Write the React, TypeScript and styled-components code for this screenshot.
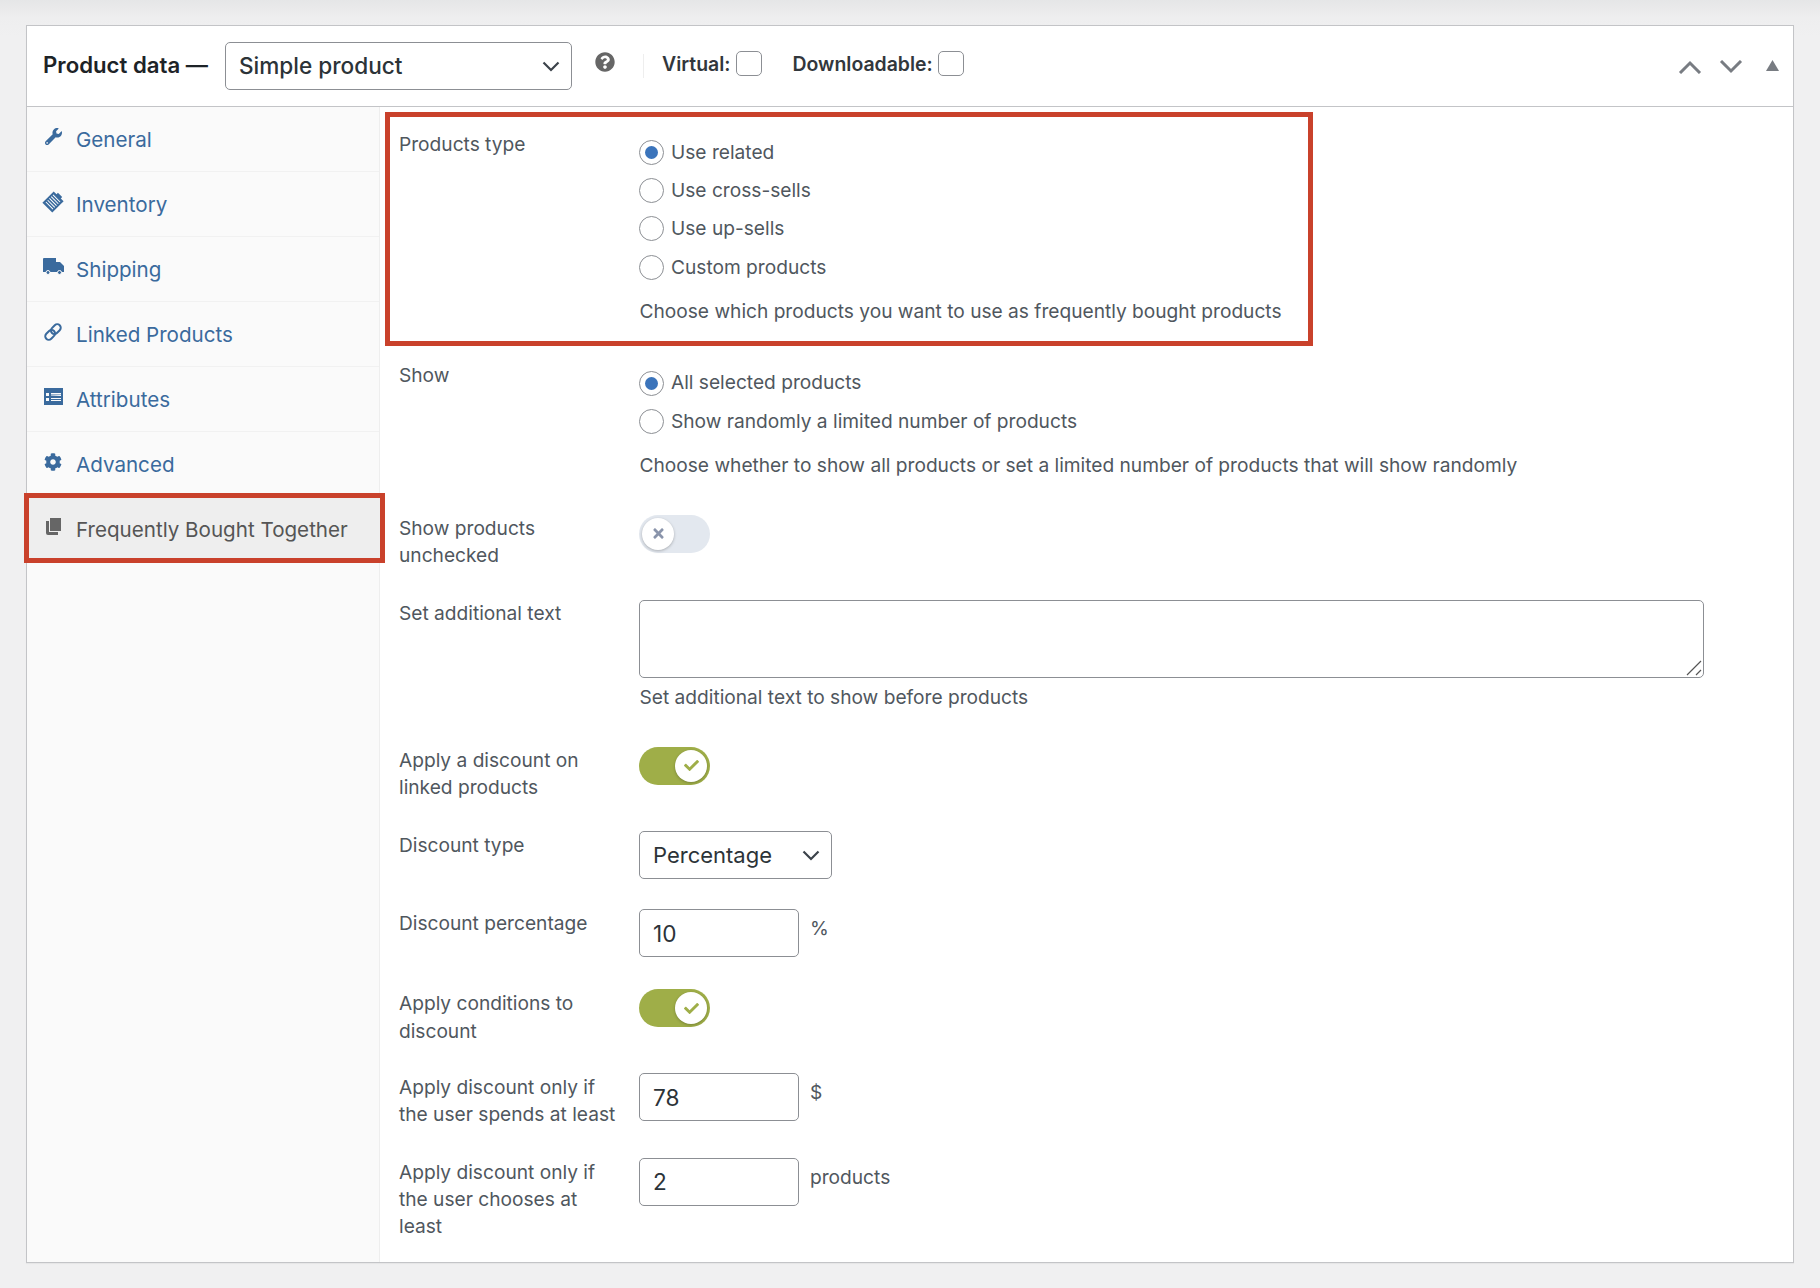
//Modules
import React from "react";
import styled, { createGlobalStyle } from "styled-components";
import { FaWrench, FaCog, FaQuestionCircle, FaTimes, FaCheck } from "react-icons/fa";

const GlobalStyle = createGlobalStyle`
    html, body{
        margin:0;
        padding:0;
    }
    body{
        min-height:1288px;
        background:linear-gradient(#e5e6e7 0, #eeeeef 18px, #f0f0f1 36px) no-repeat #f0f0f1;
        font-family:Inter, 'Noto Sans', sans-serif;
        font-size:19.15px;
        line-height:27.3px;
        color:#50575e;
    }
    *{
        box-sizing:border-box;
    }
`;

const Page = styled.div`
    padding:25px 26px 27px;
`;

const Panel = styled.section`
    width:1768px;
    background:#fff;
    border:1px solid #c3c4c7;
    box-shadow:0 1px 1px rgba(0,0,0,.04);
`;

const Header = styled.header`
    height:81px;
    display:flex;
    align-items:center;
    padding-left:16px;
    border-bottom:1px solid #c3c4c7;
`;

const Title = styled.h2`
    margin:-3px 17px 0 0;
    width:165px;
    white-space:nowrap;
    font-size:22.2px;
    font-weight:600;
    color:#1d2327;
`;

const SelectBox = styled.div<{ $width: number; $strong?: boolean }>`
    width:${p => p.$width}px;
    height:48px;
    display:flex;
    align-items:center;
    justify-content:space-between;
    padding:0 11px 0 13px;
    background:#fff;
    border:1px solid #8c8f94;
    border-radius:5px;
    font-size:${p => (p.$strong ? 22.6 : 22)}px;
    font-weight:${p => (p.$strong ? 500 : 400)};
    color:#2c3338;
`;

const HelpIcon = styled(FaQuestionCircle)`
    margin:-8px 0 0 23px;
    width:20px;
    height:20px;
    color:#666;
`;

const Divider = styled.span`
    width:1px;
    height:24px;
    margin:0 18px 0 28px;
    background:#eee;
`;

const CheckLabel = styled.label`
    display:flex;
    align-items:center;
    gap:5px;
    margin:-2px 31px 0 0;
    font-size:19.45px;
    font-weight:600;
    color:#32373c;
`;

const CheckInput = styled.input`
    appearance:none;
    margin:-2px 0 0;
    width:26px;
    height:25px;
    background:#fff;
    border:1px solid #8c8f94;
    border-radius:5px;
`;

const Controls = styled.div`
    margin-left:auto;
    display:flex;
    align-items:center;
    gap:17px;
    padding-right:14px;
    color:#787c82;
`;

const Arrow = styled.svg`
    width:24px;
    height:14px;
    margin-top:2px;
`;

const Collapse = styled.svg`
    width:13px;
    height:11px;
    margin:-1px 0 0 6px;
`;

const Body = styled.div`
    display:flex;
    align-items:stretch;
`;

const Sidebar = styled.nav`
    width:353px;
    flex:none;
    display:flex;
    flex-direction:column;
    background:#fafafa;
    border-right:1px solid #eee;
`;

const TabItem = styled.a`
    height:65px;
    display:flex;
    align-items:center;
    padding:2px 0 0 15px;
    border-bottom:1px solid #f1f1f1;
    font-size:20.6px;
    color:#3a6a9d;
`;

const ActiveTab = styled(TabItem)`
    position:relative;
    height:70px;
    margin:-4px -6px 0 -3.5px;
    padding:3px 0 0 13.5px;
    background:#eee;
    border:5px solid #c9412b;
    color:#555;
`;

const TabIcon = styled.span`
    width:22px;
    margin:-7px 12px 0 0;
    display:flex;
    justify-content:center;
    svg{
        display:block;
    }
`;

const Main = styled.div`
    flex:1;
    padding-bottom:21.5px;
`;

const Highlight = styled.div`
    width:928px;
    margin:5px 0 0 5px;
    padding:14px 0 16px 9px;
    border:5px solid #c9412b;
`;

const Row = styled.div<{ $gap?: number }>`
    display:grid;
    grid-template-columns:240px 1fr;
    margin-top:${p => p.$gap ?? 30}px;
    padding-left:19px;
`;

const InnerRow = styled(Row)`
    margin-top:0;
    padding-left:0;
`;

const Label = styled.div<{ $drop?: number }>`
    padding:${p => p.$drop ?? 0}px 20px 0 0;
`;

const Field = styled.div`
    display:flex;
    align-items:flex-start;
`;

const RadioGroup = styled.div`
    padding-top:2px;
`;

const RadioRow = styled.label`
    height:38.4px;
    display:flex;
    align-items:center;
    gap:7px;
`;

const RadioInput = styled.input`
    appearance:none;
    margin:0;
    width:25px;
    height:25px;
    display:grid;
    place-items:center;
    background:#fff;
    border:1px solid #8c8f94;
    border-radius:50%;
    &:checked::before{
        content:'';
        width:13px;
        height:13px;
        border-radius:50%;
        background:#3b74bb;
    }
`;

const Hint = styled.p<{ $top: number }>`
    margin:${p => p.$top}px 0 0;
    padding-left:.5px;
`;

const Track = styled.span<{ $on?: boolean }>`
    width:71px;
    height:38px;
    display:flex;
    align-items:center;
    justify-content:${p => (p.$on ? "flex-end" : "flex-start")};
    padding:0 3px;
    border-radius:19px;
    background:${p => (p.$on ? "#9fae48" : "#e3e8ef")};
`;

const Knob = styled.span<{ $on?: boolean }>`
    width:32px;
    height:32px;
    display:grid;
    place-items:center;
    border-radius:50%;
    background:#fff;
    box-shadow:0 1px 3px rgba(0,0,0,.25);
    color:${p => (p.$on ? "#9fae48" : "#8a94ab")};
    font-size:15px;
`;

const TextColumn = styled.div`
    flex:1;
`;

const TextAreaWrap = styled.div`
    position:relative;
    width:1065px;
`;

const TextArea = styled.textarea`
    display:block;
    width:100%;
    height:78px;
    margin:0;
    background:#fff;
    border:1px solid #8c8f94;
    border-radius:5px;
    resize:none;
`;

const ResizeGrip = styled.svg`
    position:absolute;
    right:2px;
    bottom:2px;
    width:16px;
    height:16px;
`;

const NumberInput = styled.input`
    width:160px;
    height:48px;
    margin:0;
    padding:0 13px;
    background:#fff;
    border:1px solid #8c8f94;
    border-radius:5px;
    font-family:inherit;
    font-size:22.6px;
    color:#2c3338;
`;

const Unit = styled.span`
    margin:6px 0 0 11px;
`;

const Chevron = () => (
    <svg width="18" height="11" viewBox="0 0 18 11" fill="none" stroke="#3c434a" strokeWidth="2.2">
        <path d="M1.5 1.5 9 9l7.5-7.5" />
    </svg>
);

const Toggle = ({ on }: { on?: boolean }) => (
    <Track $on={on}>
        <Knob $on={on}>{on ? <FaCheck /> : <FaTimes />}</Knob>
    </Track>
);

const InventoryIcon = () => (
    <svg width="22" height="22" viewBox="0 0 22 22">
        <g transform="rotate(45 11 11)">
            <rect x="4" y="3" width="14" height="16" fill="#3a6a9d" />
            <path d="M6 6h10M6 8.5h10M6 11h10M6 13.5h10M6 16h10" stroke="#fff" strokeWidth="1" />
            <rect x="8" y="1" width="6" height="3" fill="#3a6a9d" />
        </g>
    </svg>
);

const ShippingIcon = () => (
    <svg width="21" height="17" viewBox="0 0 21 17" fill="#3a6a9d">
        <path d="M0 1q0-1 1-1h12v14H0z" />
        <path d="M13 4h4l4 4v6h-8z" />
        <circle cx="5" cy="14.500" r="2" stroke="#fafafa" />
        <circle cx="16.500" cy="14.500" r="2" stroke="#fafafa" />
    </svg>
);

const LinkIcon = () => (
    <svg width="20" height="20" viewBox="0 0 20 20" fill="none" stroke="#3a6a9d" strokeWidth="2">
        <g transform="rotate(-45 10 10)">
            <rect x="0.5" y="6.5" width="11" height="7" rx="3.5" />
            <rect x="8.5" y="6.5" width="11" height="7" rx="3.5" />
        </g>
    </svg>
);

const AttributesIcon = () => (
    <svg width="19" height="17" viewBox="0 0 19 17">
        <path
            fillRule="evenodd"
            fill="#3a6a9d"
            d="M0 0h19v17H0zM2 5v3h3V5zm5 0v1.500h10V5zm0 2.500V8h10V7zM2 10v3h3v-3zm5 0v1h10v-1zm0 2v1h10v-1z"
        />
    </svg>
);

const CopyIcon = () => (
    <svg width="15" height="17" viewBox="0 0 15 17">
        <path fill="#666" d="M4 0h11v13H4z" />
        <path fill="#666" d="M0 3h3v11h9v3H2q-2 0-2-2z" />
    </svg>
);

const tabs = [
    { label: "General", icon: <FaWrench size={17} color="#3a6a9d" /> },
    { label: "Inventory", icon: <InventoryIcon /> },
    { label: "Shipping", icon: <ShippingIcon /> },
    { label: "Linked Products", icon: <LinkIcon /> },
    { label: "Attributes", icon: <AttributesIcon /> },
    { label: "Advanced", icon: <FaCog size={18} color="#3a6a9d" /> },
];

const App = () => (
    <Page>
        <GlobalStyle />
        <Panel>
            <Header>
                <Title>Product data —</Title>
                <SelectBox $width={347} $strong>
                    Simple product
                    <Chevron />
                </SelectBox>
                <HelpIcon />
                <Divider />
                <CheckLabel>
                    Virtual:
                    <CheckInput type="checkbox" />
                </CheckLabel>
                <CheckLabel>
                    Downloadable:
                    <CheckInput type="checkbox" />
                </CheckLabel>
                <Controls>
                    <Arrow viewBox="0 0 24 14" fill="none" stroke="#787c82" strokeWidth="3">
                        <path d="M2 13 12 3l10 10" />
                    </Arrow>
                    <Arrow viewBox="0 0 24 14" fill="none" stroke="#787c82" strokeWidth="3">
                        <path d="M2 1l10 10L22 1" />
                    </Arrow>
                    <Collapse viewBox="0 0 13 11" fill="#787c82">
                        <path d="M6.500 0 13 11H0z" />
                    </Collapse>
                </Controls>
            </Header>
            <Body>
                <Sidebar>
                    {tabs.map(tab => (
                        <TabItem key={tab.label}>
                            <TabIcon>{tab.icon}</TabIcon>
                            {tab.label}
                        </TabItem>
                    ))}
                    <ActiveTab>
                        <TabIcon>
                            <CopyIcon />
                        </TabIcon>
                        Frequently Bought Together
                    </ActiveTab>
                </Sidebar>
                <Main>
                    <Highlight>
                        <InnerRow>
                            <Label>Products type</Label>
                            <TextColumn>
                                <RadioGroup>
                                    <RadioRow><RadioInput type="radio" name="type" defaultChecked />Use related</RadioRow>
                                    <RadioRow><RadioInput type="radio" name="type" />Use cross-sells</RadioRow>
                                    <RadioRow><RadioInput type="radio" name="type" />Use up-sells</RadioRow>
                                    <RadioRow><RadioInput type="radio" name="type" />Custom products</RadioRow>
                                </RadioGroup>
                                <Hint $top={11}>Choose which products you want to use as frequently bought products</Hint>
                            </TextColumn>
                        </InnerRow>
                    </Highlight>
                    <Row $gap={16}>
                        <Label>Show</Label>
                        <TextColumn>
                            <RadioGroup>
                                <RadioRow><RadioInput type="radio" name="show" defaultChecked />All selected products</RadioRow>
                                <RadioRow><RadioInput type="radio" name="show" />Show randomly a limited number of products</RadioRow>
                            </RadioGroup>
                            <Hint $top={11}>Choose whether to show all products or set a limited number of products that will show randomly</Hint>
                        </TextColumn>
                    </Row>
                    <Row $gap={36}>
                        <Label>Show products unchecked</Label>
                        <Field><Toggle /></Field>
                    </Row>
                    <Row>
                        <Label>Set additional text</Label>
                        <TextColumn>
                            <TextAreaWrap>
                                <TextArea />
                                <ResizeGrip viewBox="0 0 16 16" stroke="#555" strokeWidth="1.2">
                                    <path d="M1 15 15 1M10 15l5-5" />
                                </ResizeGrip>
                            </TextAreaWrap>
                            <Hint $top={6}>Set additional text to show before products</Hint>
                        </TextColumn>
                    </Row>
                    <Row $gap={36}>
                        <Label>Apply a discount on linked products</Label>
                        <Field><Toggle on /></Field>
                    </Row>
                    <Row>
                        <Label $drop={1}>Discount type</Label>
                        <Field>
                            <SelectBox $width={193}>
                                Percentage
                                <Chevron />
                            </SelectBox>
                        </Field>
                    </Row>
                    <Row>
                        <Label $drop={1}>Discount percentage</Label>
                        <Field>
                            <NumberInput defaultValue="10" />
                            <Unit>%</Unit>
                        </Field>
                    </Row>
                    <Row $gap={32}>
                        <Label $drop={1}>Apply conditions to discount</Label>
                        <Field><Toggle on /></Field>
                    </Row>
                    <Row $gap={28}>
                        <Label $drop={1}>Apply discount only if the user spends at least</Label>
                        <Field>
                            <NumberInput defaultValue="78" />
                            <Unit>$</Unit>
                        </Field>
                    </Row>
                    <Row $gap={29}>
                        <Label $drop={1}>Apply discount only if the user chooses at least</Label>
                        <Field>
                            <NumberInput defaultValue="2" />
                            <Unit>products</Unit>
                        </Field>
                    </Row>
                </Main>
            </Body>
        </Panel>
    </Page>
);

export default App;
